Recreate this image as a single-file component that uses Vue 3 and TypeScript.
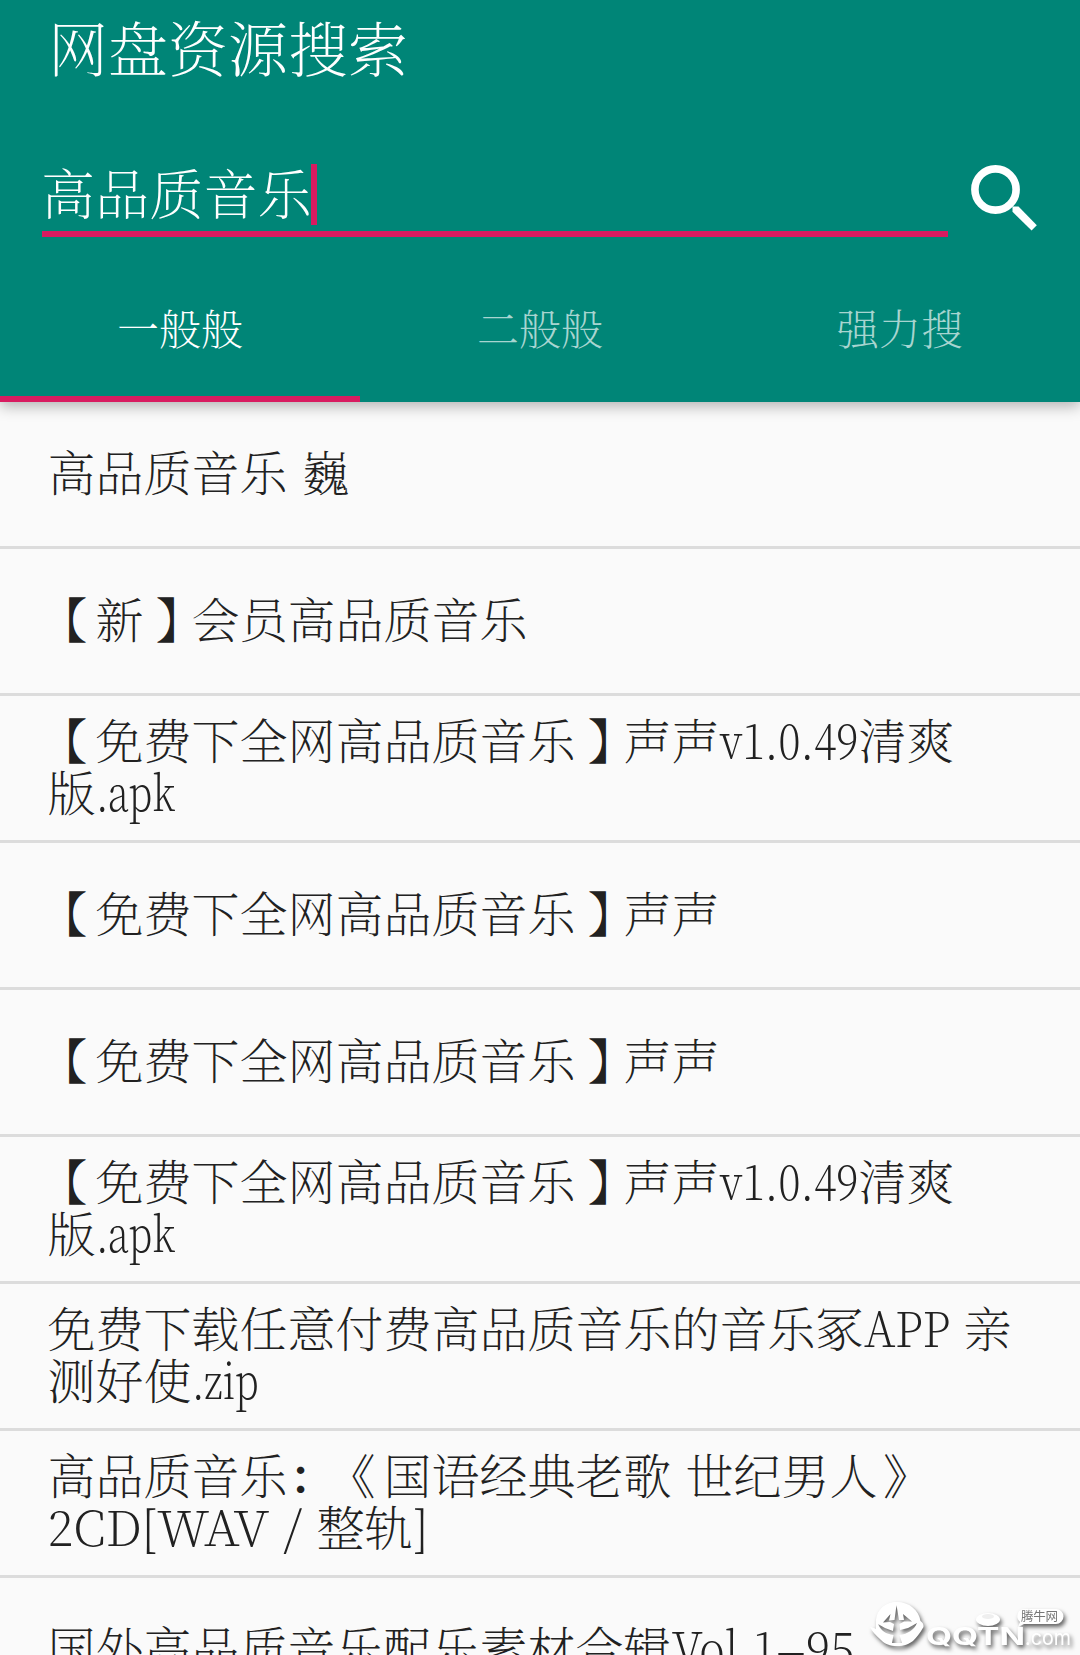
<script setup lang="ts">
interface Part { t: string; w?: number; dx?: number; bold?: boolean }

// Latin runs are fitted to the advance width w (px)
const latin = (t: string, w: number): Part => ({ t, w })

// Full-width punctuation sits off the default position inside its cell
const nudges: Record<string, number> = { '【': -8, '】': 12, '《': -8, '》': 5.5, '：': 1 }
const cjk = (t: string): Part[] =>
  t.split(/([【】《》：])/).filter(Boolean).map((s) => ({ t: s, dx: nudges[s], bold: s === '：' }))

const apk: Part[][] = [
  [...cjk('【免费下全网高品质音乐】声声'), latin('v1.0.49', 139), ...cjk('清爽')],
  [...cjk('版'), latin('.apk', 79)],
]
const sheng: Part[][] = [cjk('【免费下全网高品质音乐】声声')]
const rows: Part[][][] = [
  [cjk('高品质音乐 巍')],
  [cjk('【新】会员高品质音乐')],
  apk,
  sheng,
  sheng,
  apk,
  [
    [...cjk('免费下载任意付费高品质音乐的音乐冢'), latin('APP', 86), ...cjk(' 亲')],
    [...cjk('测好使'), latin('.zip', 67)],
  ],
  [
    cjk('高品质音乐：《国语经典老歌 世纪男人》'),
    [latin('2CD[', 109), latin('WAV', 112), latin(' / ', 48), ...cjk('整轨'), latin(']', 15)],
  ],
  [[...cjk('国外高品质音乐配乐素材合辑'), latin('Vol.1', 104), latin('–', 30), latin('95', 48)]],
]
const tabs = ['一般般', '二般般', '强力搜']

const vFit = {
  mounted(el: HTMLElement, binding: { value: number }) {
    const inner = el.firstElementChild as HTMLElement
    inner.style.transform = `scaleX(${binding.value / inner.offsetWidth})`
  },
}
</script>

<template>
  <div class="screen">
    <header class="bar">
      <h1 class="title">网盘资源搜索</h1>
      <div class="search">
        <div class="field"><span>高品质音乐</span><i class="caret"></i></div>
        <svg class="glass" width="68" height="68" viewBox="0 0 68 68">
          <circle cx="25.5" cy="25.5" r="20.6" fill="none" stroke="#fff" stroke-width="7.6" />
          <path d="M42.5 42.5h6L66.8 61.2 61.6 66.4 42.5 47.8z" fill="#fff" />
        </svg>
      </div>
      <nav class="tabs">
        <div v-for="(t, i) in tabs" :key="t" class="tab" :class="{ active: i === 0 }">{{ t }}</div>
      </nav>
    </header>
    <main class="list">
      <div v-for="(row, r) in rows" :key="r" class="row">
        <div v-for="(line, l) in row" :key="l" class="line">
          <template v-for="(p, k) in line" :key="k"><span v-if="p.w" v-fit="p.w" class="latin" :style="{ width: p.w + 'px' }"><span>{{ p.t }}</span></span><span v-else-if="p.dx" class="mark" :class="{ bold: p.bold }" :style="{ transform: `translateX(${p.dx}px)` }">{{ p.t }}</span><span v-else>{{ p.t }}</span></template>
        </div>
      </div>
    </main>
    <svg class="stamp" width="214" height="60" viewBox="866 1595 214 60">
      <g fill="#fff">
        <path fill-rule="evenodd" d="M876 1622C876 1610 885 1602 897 1602S919 1610 920.500 1621C922 1622 924 1624 923.500 1627C920 1633 917 1637 913 1641C909 1644 904 1646 897 1646S885 1644 881 1640C876 1636 872 1631 870 1627C872 1627 874 1628 876 1629zM896.500 1605L894.500 1620 889 1620.500 890.500 1614 883 1622.500 890 1622 894 1624 893 1631 885 1628 878 1624C881 1631 886 1634 893.500 1635L892 1643H902L899.500 1635C908 1634 914 1630 917 1623L908 1628 900 1630 899.500 1624 904 1621.500 912 1621.500 903 1614 904 1620 899 1620z" />
        <ellipse cx="988" cy="1619.500" rx="12" ry="6.500" />
        <path d="M1023 1609H1056A7.500 7.500 0 0 1 1056 1624H1024L1018 1627 1020 1622A7.500 7.500 0 0 1 1023 1609z" />
        <text x="926" y="1645" font-size="24" font-weight="700" textLength="99" lengthAdjust="spacingAndGlyphs">QQTN</text>
        <text x="1025" y="1645" font-size="21" font-weight="400" textLength="46" lengthAdjust="spacingAndGlyphs">.com</text>
      </g>
      <ellipse cx="988" cy="1616.500" rx="6" ry="2.500" fill="#efefef" />
      <text class="zh" x="1021" y="1621" font-size="12.500" fill="#777" textLength="37">腾牛网</text>
    </svg>
  </div>
</template>

<style>
html, body { margin: 0; overflow: hidden; }
</style>
<style scoped>
.screen {
  position: relative;
  width: 1080px;
  height: 1655px;
  overflow: hidden;
  background: #fafafa;
  color: #212121;
  font-family: 'Noto Serif CJK SC', 'Noto Sans CJK SC', 'Liberation Serif', serif;
  font-weight: 200;
  text-spacing-trim: space-all;
}
.bar {
  position: relative;
  z-index: 1;
  display: flex;
  flex-direction: column;
  height: 402px;
  background: #008577;
  color: #fff;
  box-shadow: 0 4px 14px rgba(0, 0, 0, 0.3);
}
.title { margin: 0; padding: 4px 0 0 48px; height: 84px; font-size: 60px; line-height: 84px; font-weight: 200; }
.search { display: flex; margin: 65px 0 0 42px; height: 84px; gap: 22px; }
.field {
  display: flex;
  box-sizing: border-box;
  width: 906px;
  height: 84px;
  border-bottom: 6px solid #d81b60;
  font-size: 54px;
  line-height: 77px;
}
.field span { margin-left: -1px; letter-spacing: 0.2px; }
.caret { width: 6px; height: 61px; margin: 11px 0 0 -1px; background: #d81b60; }
.glass { margin-top: 11px; }
.tabs { display: flex; height: 165px; }
.tab { flex: 1; box-sizing: border-box; text-align: center; font-size: 42px; line-height: 180px; height: 165px; color: rgba(255, 255, 255, 0.68); }
.tab.active { color: #fff; border-bottom: 6px solid #d81b60; }
.row {
  display: flex;
  flex-direction: column;
  justify-content: center;
  box-sizing: border-box;
  height: 147px;
  padding: 0 0 7px 47.5px;
  border-bottom: 3px solid #dcdcdc;
}
.line { height: 52px; font-size: 48px; line-height: 52px; white-space: pre; word-spacing: 1.5px; }
.mark { display: inline-block; line-height: 52px; }
.mark.bold { font-weight: 600; }
.latin { display: inline-block; font-size: 49px; line-height: 40px; word-spacing: 0; }
.latin > span { display: inline-block; transform-origin: 0 50%; white-space: pre; font-weight: 250; }
.stamp {
  position: absolute;
  right: 0;
  bottom: 0;
  overflow: hidden;
  font-family: Inter, sans-serif;
  filter: drop-shadow(2px 3px 2px rgba(0, 0, 0, 0.6));
}
.zh { font-family: 'Noto Sans CJK SC', sans-serif; font-weight: 400; }
</style>
